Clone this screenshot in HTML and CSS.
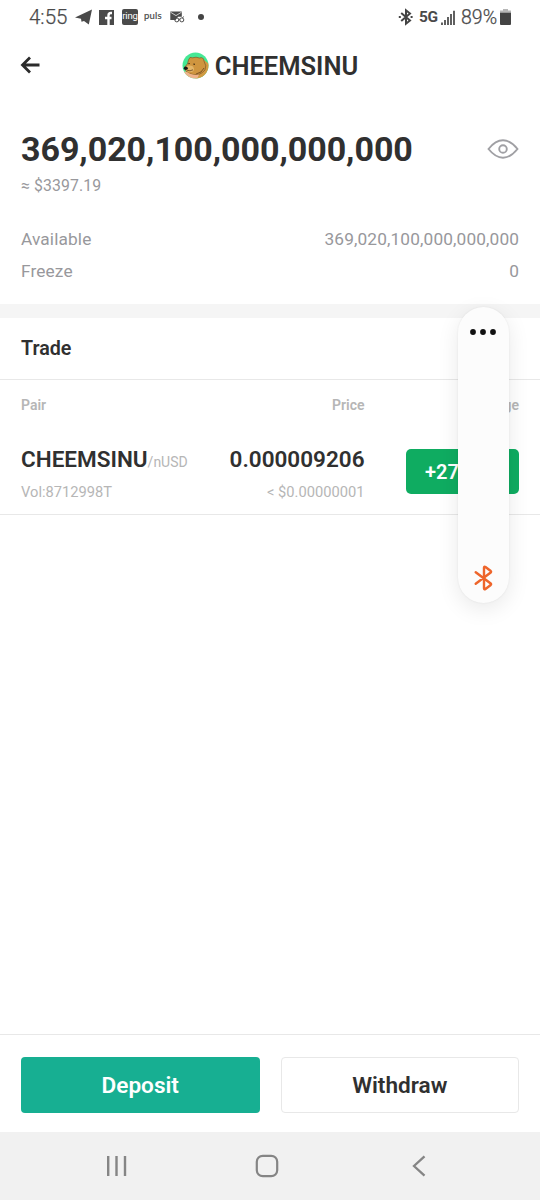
FILE: index.html
```html
<!DOCTYPE html>
<html lang="en">
<head>
<meta charset="utf-8">
<title>CHEEMSINU</title>
<link rel="stylesheet" href="styles.css">
</head>
<body>
<div class="screen">
  <div class="status">
    <span class="clock">4:55</span>
    <svg class="s-telegram" width="18" height="16" viewBox="0 0 18 16"><path d="M0 8.500L17 .6 13.800 15.500 9 12 6.500 12.800 6 9.800Z" fill="#4a4a4a"/></svg>
    <svg class="s-facebook" width="15" height="15" viewBox="0 0 15 15"><path fill="#4a4a4a" d="M0 0h15v15H0z"/><path d="M13 3h-1q-2.500 0-2.500 2.500V15M6 8h6.500" fill="none" stroke="#fff" stroke-width="2.400"/></svg>
    <span class="ring">ring</span>
    <span class="puls">puls</span>
    <svg class="s-mail" width="15" height="12" viewBox="0 0 15 12"><path d="M.3.5h11.500v5.200H8L5.500 9H.3Z" fill="#4a4a4a"/><path d="M.5 1.200L6 4.600 11.500 1.200" fill="none" stroke="#fff" stroke-width=".7"/><g fill="none" stroke="#4a4a4a"><circle cx="6.800" cy="8.900" r="2"/><circle cx="11.800" cy="8.900" r="2"/><path d="M8.800 8.300h1M12.500 7l1-1.500"/></g></svg>
    <span class="dot"></span>
    <svg class="s-bluetooth" width="16" height="18" viewBox="0 0 16 18"><path d="M3.200 5L12 12.500 8 15.700V2.300L12 5.500 3.200 13" fill="none" stroke="#444" stroke-width="2"/><path d="M.8 9h2M12.600 9h2" stroke="#444" stroke-width="2"/></svg>
    <span class="net">5G</span>
    <svg class="s-signal" width="14" height="15" viewBox="0 0 14 15"><path d="M1 12.500V15M4 10v5M7 7v8M10 4v11M13 .8V15" stroke="#505050" stroke-width="1.800"/></svg>
    <span class="percent">89%</span>
    <svg class="s-battery" width="11" height="16" viewBox="0 0 11 16"><path d="M3 0h5v1.500h3v3H0v-3h3Z" fill="#b7b7b7"/><path d="M0 3.800h11V15q0 1-1 1H1q-1 0-1-1Z" fill="#444"/></svg>
  </div>

  <header class="header">
    <svg class="back" width="20" height="18" viewBox="0 0 20 18"><path d="M19.500 9H2.500M10 1.500L2.500 9l7.500 7.500" fill="none" stroke="#2b2b2b" stroke-width="2.800"/></svg>
    <div class="title">
      <svg width="27" height="27" viewBox="0 0 27 27">
        <defs><clipPath id="coin"><circle cx="13.500" cy="13.500" r="13"/></clipPath></defs>
        <g clip-path="url(#coin)">
          <path d="M0 0h27v27H0z" fill="#45e895"/>
          <path d="M3 17Q5 21 9 24L15 27H27V12L22 8Z" fill="#d39a42"/>
          <path d="M6.500 8Q7.500 4 10.500 5.800Q14 4.500 17.500 6Q21.500 4.500 22 9Q25 14 23 18Q18 24 11 22.500Q6 22 4 19L2.500 15.500Q4 13 5.500 12Z" fill="#cf953f" stroke="#7b5a2a" stroke-width=".7"/>
          <path d="M4 14.500Q8 12.500 11 14.500Q13.500 18 10 20Q6 20.500 4 18Z" fill="#e3b568"/>
          <path d="M0 19L5 20Q10 24 17 22.500L15 27H0Z" fill="#efb38b"/>
          <path d="M5 18.200Q8 19.600 11 17.800M14 22Q20 21 22 16" fill="none" stroke="#684420" stroke-width=".8"/>
          <ellipse cx="3.800" cy="16.200" rx="2" ry="1.700" fill="#151515"/>
          <path d="M6.300 11.800l1.500-.3M11.300 12l1.700.4" stroke="#453015" stroke-width="1.100"/>
        </g>
      </svg>
      <h1>CHEEMSINU</h1>
    </div>
  </header>

  <section class="balance">
    <div class="total"><span>369,020,100,000,000,000</span>
      <svg width="32" height="20" viewBox="0 0 32 20" fill="none" stroke="#a0a0a4" stroke-width="1.900"><path d="M1.500 10Q8.500 1.300 16 1.300T30.500 10Q23.500 18.700 16 18.700T1.500 10Z"/><circle cx="16" cy="10" r="3.800"/></svg>
    </div>
    <div class="approx">≈ $3397.19</div>
    <div class="row"><span>Available</span><span class="amount">369,020,100,000,000,000</span></div>
    <div class="row"><span>Freeze</span><span class="amount">0</span></div>
  </section>

  <h2 class="section-title">Trade</h2>
  <section class="market">
    <div class="grid labels"><span>Pair</span><span>Price</span><span>Change</span></div>
    <div class="grid pair">
      <div><div class="name">CHEEMSINU<small>/nUSD</small></div><div class="sub">Vol:8712998T</div></div>
      <div class="price"><div class="name">0.000009206</div><div class="sub">&lt; $0.00000001</div></div>
      <div class="change"><span>+27</span></div>
    </div>
  </section>

  <footer class="actions"><button class="primary">Deposit</button><button class="secondary">Withdraw</button></footer>
  <nav class="nav">
    <svg width="22" height="22" viewBox="0 0 22 22"><path d="M2.200 1v20M10.500 1v20M19 1v20" stroke="#858585" stroke-width="2.400"/></svg>
    <svg class="home" width="24" height="24" viewBox="0 0 24 24"><rect x="1.800" y="1.800" width="20.400" height="20.400" rx="6" fill="none" stroke="#858585" stroke-width="2.200"/></svg>
    <svg width="14" height="22" viewBox="0 0 14 22"><path d="M12.500 1.300L2 11l10.500 9.700" fill="none" stroke="#858585" stroke-width="2.300"/></svg>
  </nav>

  <aside class="edge-panel">
    <svg class="more" width="28" height="8" viewBox="0 0 28 8" fill="#111"><circle cx="4" cy="4" r="2.900"/><circle cx="14" cy="4" r="2.900"/><circle cx="24" cy="4" r="2.900"/></svg>
    <svg width="20" height="26" viewBox="0 0 20 26"><path d="M1.700 7.200L16.700 18.500Q17.500 19.200 16.700 20L11.500 24Q10 25 10 23.200V2.800Q10 1 11.500 2L16.700 6Q17.500 6.800 16.700 7.500L1.700 18.800" fill="none" stroke="#ee652b" stroke-width="2.400" stroke-linecap="round"/></svg>
  </aside>
</div>
</body>
</html>
```
FILE: styles.css
```css
* { box-sizing: border-box; }
body { margin: 0; background: #fff; font-family: Roboto, "Liberation Sans", sans-serif; color: #303030; }
svg { display: block; flex: none; }
h1, h2 { margin: 0; }
.screen { position: relative; width: 540px; height: 1200px; display: flex; flex-direction: column; overflow: hidden; }

.status { height: 34px; flex: none; display: flex; align-items: center; padding: 0 29px; color: #4a4a4a; white-space: nowrap; }
.clock { width: 46px; font-size: 20.500px; font-weight: 300; line-height: 34px; -webkit-text-stroke: .25px #4a4a4a; }
.s-facebook { margin-left: 6px; }
.ring { width: 16px; height: 16px; margin-left: 8px; border-radius: 2px; background: #4a4a4a; color: #fff; font-size: 9.500px; line-height: 14px; display: flex; justify-content: center; letter-spacing: -.2px; }
.puls { width: 18px; margin-left: 6px; font: 9.500px/14px Lato, sans-serif; letter-spacing: .2px; -webkit-text-stroke: .2px #4a4a4a; margin-top: -2px; }
.s-mail { margin-left: 8px; }
.dot { width: 6px; height: 6px; margin-left: 13px; border-radius: 50%; background: #444; }
.s-bluetooth { margin-left: auto; }
.net { width: 18px; margin-left: 5px; font-size: 15.500px; font-weight: 700; letter-spacing: -.3px; }
.s-signal { margin-left: 4px; }
.percent { width: 38px; margin-left: 6px; font-size: 19.500px; font-weight: 300; -webkit-text-stroke: .25px #4a4a4a; }
.s-battery { margin-left: 1px; }

.header { height: 64px; flex: none; display: grid; grid-template-columns: 20px 1fr 20px; align-items: center; padding: 0 20px 2px; }
.title { display: flex; align-items: center; justify-content: center; gap: 6px; }
.title h1 { padding-top: 1px; font-size: 25.500px; line-height: 30px; font-weight: 600; }

.balance { flex: none; box-sizing: content-box; height: 206px; padding: 0 21px; border-bottom: 14px solid #f5f5f5; color: #98989c; }
.total { height: 74px; padding-top: 28px; display: flex; justify-content: space-between; align-items: center; color: #303030; font-size: 34px; line-height: 42px; font-weight: 700; letter-spacing: -.05px; }
.approx { height: 51px; font-size: 15.800px; line-height: 28px; letter-spacing: .1px; }
.row { height: 32px; display: flex; justify-content: space-between; font-size: 17.300px; line-height: 32px; letter-spacing: .12px; }
.amount { margin-right: -.1px; }

.section-title { height: 62px; flex: none; padding: 0 21px; border-bottom: 1px solid #e8e8e8; font-size: 19.700px; line-height: 62px; font-weight: 600; }
.market { height: 135px; flex: none; border-bottom: 1px solid #e8e8e8; padding: 0 21px; }
.grid { display: grid; grid-template-columns: 170px 173.500px 1fr; }
.labels { height: 49px; color: #b6b6b6; font-size: 14px; line-height: 50px; font-weight: 600; }
.labels span:not(:first-child) { text-align: right; }
.name { height: 34px; padding-top: 13px; box-sizing: content-box; font-size: 22.500px; line-height: 34px; font-weight: 600; white-space: nowrap; }
.name small { color: #b6b6b6; font-size: 14px; font-weight: 400; }
.sub { color: #b6b6b6; font-size: 14.700px; line-height: 32px; }
.price { text-align: right; }
.change { width: 113px; height: 45px; margin-top: 20px; padding-left: 19px; justify-self: end; border-radius: 5px; background: #0fac61; color: #fff; font-size: 20px; line-height: 46px; font-weight: 600; }

.actions { height: 98px; flex: none; margin-top: auto; border-top: 1px solid #e8e8e8; padding: 22px 21px 20px; display: grid; grid-template-columns: 238.500px 238.500px; justify-content: space-between; }
.actions button { height: 56px; padding: 2px 0 0; border-radius: 4px; font: 600 22.600px/54px Roboto, sans-serif; }
.primary { border: 0; background: #17af92; color: #fff; }
.actions .secondary { border: 1px solid #e8e8e8; background: #fff; color: #303030; line-height: 52px; }
.nav { height: 68px; flex: none; padding: 0 114px 0 106px; display: flex; align-items: center; justify-content: space-between; background: #f1f1f1; }
.home { margin: 0 3px 0 -3px; }

.edge-panel { position: absolute; left: 458px; top: 307px; width: 51px; height: 296px; padding: 21px 0 12px; display: flex; flex-direction: column; align-items: center; justify-content: space-between; border-radius: 26px; background: #fcfcfc; box-shadow: 0 6px 22px rgba(0,0,0,.09), 0 0 2px rgba(0,0,0,.08); }
.more { margin-right: 1px; }
```
